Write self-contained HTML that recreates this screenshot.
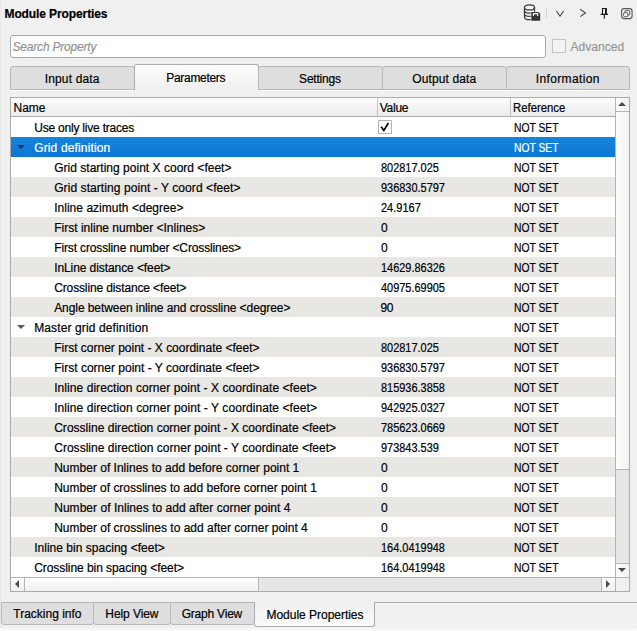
<!DOCTYPE html>
<html lang="en"><head><meta charset="utf-8"><title>Module Properties</title>
<style>
html,body{margin:0;padding:0}
body{width:637px;height:631px;background:#f0f0f0;overflow:hidden;position:relative;font:12px "Liberation Sans",sans-serif;color:#000}
.a{position:absolute}
.t{position:absolute;white-space:pre;line-height:20px;height:20px;font-size:12px;margin-top:1px;-webkit-text-stroke:0.2px}
.row{position:absolute;left:11px;width:604px;height:20px}
.alt{background:#e9e7e3}
.sel{background:linear-gradient(#1683dd,#0c78d5)}
.tab{position:absolute;box-sizing:border-box;border:1px solid #b9b9b9;background:#dedede}
.hdr{position:absolute;top:98px;height:18px;background:linear-gradient(#fcfcfc,#ececec)}
</style></head><body>

<div class="a" style="left:0;top:0;width:1px;height:628px;background:#e6e6e6"></div>
<div class="a" style="left:0;top:628px;width:637px;height:3px;background:linear-gradient(#f4f4f4,#fbfbfb)"></div>
<div class="t" style="left:4.50px;letter-spacing:-0.105px;top:3px;font-weight:bold;">Module Properties</div>
<svg class="a" style="left:520px;top:0" width="117" height="26" viewBox="520 0 117 26" fill="none">
<g stroke="#3a3a3a" stroke-width="1.25">
<ellipse cx="529.5" cy="7.4" rx="5" ry="2.5" fill="#f6f6f6"/>
<path d="M524.5 7.4v9.8c0 1.4 2.2 2.5 5 2.5h1.2M534.5 7.4v4M524.5 10.7c0 1.4 2.2 2.4 5 2.4h1.2M524.5 14c0 1.4 2.2 2.4 5 2.4h1.2"/>
</g>
<path d="M531.3 11.9h7l1.9 1.9v7h-8.9z" fill="#333"/>
<path d="M533.5 15.9v-2.3h4.1v2.3" stroke="#f4f4f4" stroke-width="1.2"/>
<rect x="546" y="8" width="1" height="10" fill="#d2d2d2"/>
<path d="M556.3 11l3.7 5 3.7-5" stroke="#444" stroke-width="1.1"/>
<path d="M580.2 9.2l5.2 3.7-5.2 3.7" stroke="#444" stroke-width="1.1"/>
<path d="M602.5 14.2v-5.7h3.6M600.6 14.4h7.4M604.3 14.4v4.4" stroke="#1c1c1c" stroke-width="1.1"/>
<rect x="605" y="8" width="1.9" height="6.4" fill="#1c1c1c"/>
<rect x="621.6" y="8.6" width="10.5" height="10" rx="2.6" stroke="#5a5552" stroke-width="1.1"/>
<rect x="625" y="10.6" width="4.8" height="4.4" rx="1" stroke="#5a5552" stroke-width="1"/>
<rect x="623.6" y="12.7" width="4.2" height="4" rx="1" stroke="#5a5552" stroke-width="1" fill="#f8f8f8"/>
</svg>
<div class="a" style="left:10px;top:35px;width:536px;height:23px;box-sizing:border-box;border:1px solid #aaa;border-radius:3px;background:#fff"></div>
<div class="t" style="left:12.50px;letter-spacing:-0.194px;top:36px;font-style:italic;color:#939393;">Search Property</div>
<div class="a" style="left:552px;top:39px;width:14px;height:14px;box-sizing:border-box;border:1px solid #c4c4c4;background:#f3f3f3"></div>
<div class="t" style="left:570.50px;letter-spacing:0.032px;top:36px;color:#979797;">Advanced</div>
<div class="a" style="left:10px;top:90px;width:620px;height:1px;background:#fff"></div>
<div class="tab" style="left:10px;top:66px;width:125px;height:24px;border-radius:3px 3px 0 0"></div>
<div class="tab" style="left:134px;top:64px;width:125px;height:26px;border-color:#ababab;border-bottom:none;border-radius:3px 3px 0 0;background:linear-gradient(#fdfdfd,#f0f0f0)"></div>
<div class="a" style="left:134px;top:90px;width:125px;height:1px;background:#f0f0f0"></div>
<div class="tab" style="left:258px;top:66px;width:125px;height:24px;border-radius:3px 3px 0 0"></div>
<div class="tab" style="left:382px;top:66px;width:125px;height:24px;border-radius:3px 3px 0 0"></div>
<div class="tab" style="left:506px;top:66px;width:124px;height:24px;border-radius:3px 3px 0 0"></div>
<div class="t" style="left:44.70px;letter-spacing:0.157px;top:68px;">Input data</div>
<div class="t" style="left:166.30px;letter-spacing:-0.315px;top:67px;">Parameters</div>
<div class="t" style="left:299.10px;letter-spacing:-0.208px;top:68px;">Settings</div>
<div class="t" style="left:412.30px;letter-spacing:0.108px;top:68px;">Output data</div>
<div class="t" style="left:535.70px;letter-spacing:0.377px;top:68px;">Information</div>
<div class="a" style="left:10px;top:97px;width:620px;height:495px;box-sizing:border-box;border:1px solid #ababab;background:#fff"></div>
<div class="hdr" style="left:11px;width:604px"></div>
<div class="a" style="left:11px;top:116px;width:604px;height:1px;background:#ababab"></div>
<div class="a" style="left:377px;top:98px;width:1px;height:18px;background:#c4c4c4"></div>
<div class="a" style="left:510px;top:98px;width:1px;height:18px;background:#c4c4c4"></div>
<div class="t" style="left:13.50px;letter-spacing:-0.005px;top:97px;">Name</div>
<div class="t" style="left:379.70px;letter-spacing:-0.253px;top:97px;">Value</div>
<div class="t" style="left:513.20px;transform:scaleX(0.9445);transform-origin:0 0;top:97px;">Reference</div>
<div class="t" style="left:34.20px;letter-spacing:-0.208px;top:117px;">Use only live traces</div>
<div class="a" style="left:378px;top:120px;width:14px;height:14px;box-sizing:border-box;border:1px solid #b4b4b4;background:#fff"></div>
<svg class="a" style="left:378px;top:120px" width="14" height="14" viewBox="0 0 14 14"><path d="M3.2 6.8l2.6 3.6 4.6-7.4" fill="none" stroke="#000" stroke-width="1.7"/></svg>
<div class="t" style="left:514.00px;transform:scaleX(0.8591);transform-origin:0 0;top:117px;">NOT SET</div>
<div class="row sel" style="top:137px"></div>
<div class="t" style="left:34.20px;letter-spacing:0.147px;top:137px;color:#fff;">Grid definition</div>
<div class="t" style="left:514.00px;transform:scaleX(0.8591);transform-origin:0 0;top:137px;color:#fff;">NOT SET</div>
<div class="t" style="left:54.20px;letter-spacing:0.016px;top:157px;">Grid starting point X coord &lt;feet&gt;</div>
<div class="t" style="left:380.50px;transform:scaleX(0.9116);transform-origin:0 0;top:157px">802817.025</div>
<div class="t" style="left:514.00px;transform:scaleX(0.8591);transform-origin:0 0;top:157px;">NOT SET</div>
<div class="row alt" style="top:177px"></div>
<div class="t" style="left:54.20px;letter-spacing:0.075px;top:177px;">Grid starting point - Y coord &lt;feet&gt;</div>
<div class="t" style="left:380.50px;transform:scaleX(0.9118);transform-origin:0 0;top:177px">936830.5797</div>
<div class="t" style="left:514.00px;transform:scaleX(0.8591);transform-origin:0 0;top:177px;">NOT SET</div>
<div class="t" style="left:54.20px;letter-spacing:0.024px;top:197px;">Inline azimuth &lt;degree&gt;</div>
<div class="t" style="left:380.50px;transform:scaleX(0.9172);transform-origin:0 0;top:197px">24.9167</div>
<div class="t" style="left:514.00px;transform:scaleX(0.8591);transform-origin:0 0;top:197px;">NOT SET</div>
<div class="row alt" style="top:217px"></div>
<div class="t" style="left:54.20px;letter-spacing:0.013px;top:217px;">First inline number &lt;Inlines&gt;</div>
<div class="t" style="left:381.10px;top:217px">0</div>
<div class="t" style="left:514.00px;transform:scaleX(0.8591);transform-origin:0 0;top:217px;">NOT SET</div>
<div class="t" style="left:54.20px;letter-spacing:-0.133px;top:237px;">First crossline number &lt;Crosslines&gt;</div>
<div class="t" style="left:381.10px;top:237px">0</div>
<div class="t" style="left:514.00px;transform:scaleX(0.8591);transform-origin:0 0;top:237px;">NOT SET</div>
<div class="row alt" style="top:257px"></div>
<div class="t" style="left:54.20px;letter-spacing:-0.085px;top:257px;">InLine distance &lt;feet&gt;</div>
<div class="t" style="left:380.50px;transform:scaleX(0.9118);transform-origin:0 0;top:257px">14629.86326</div>
<div class="t" style="left:514.00px;transform:scaleX(0.8591);transform-origin:0 0;top:257px;">NOT SET</div>
<div class="t" style="left:54.20px;letter-spacing:-0.130px;top:277px;">Crossline distance &lt;feet&gt;</div>
<div class="t" style="left:380.50px;transform:scaleX(0.9118);transform-origin:0 0;top:277px">40975.69905</div>
<div class="t" style="left:514.00px;transform:scaleX(0.8591);transform-origin:0 0;top:277px;">NOT SET</div>
<div class="row alt" style="top:297px"></div>
<div class="t" style="left:54.20px;letter-spacing:-0.077px;top:297px;">Angle between inline and crossline &lt;degree&gt;</div>
<div class="t" style="left:380.50px;letter-spacing:-0.459px;top:297px">90</div>
<div class="t" style="left:514.00px;transform:scaleX(0.8591);transform-origin:0 0;top:297px;">NOT SET</div>
<div class="t" style="left:34.20px;letter-spacing:0.124px;top:317px;">Master grid definition</div>
<div class="t" style="left:514.00px;transform:scaleX(0.8591);transform-origin:0 0;top:317px;">NOT SET</div>
<div class="row alt" style="top:337px"></div>
<div class="t" style="left:54.20px;letter-spacing:-0.004px;top:337px;">First corner point - X coordinate &lt;feet&gt;</div>
<div class="t" style="left:380.50px;transform:scaleX(0.9116);transform-origin:0 0;top:337px">802817.025</div>
<div class="t" style="left:514.00px;transform:scaleX(0.8591);transform-origin:0 0;top:337px;">NOT SET</div>
<div class="t" style="left:54.20px;letter-spacing:0.007px;top:357px;">First corner point - Y coordinate &lt;feet&gt;</div>
<div class="t" style="left:380.50px;transform:scaleX(0.9118);transform-origin:0 0;top:357px">936830.5797</div>
<div class="t" style="left:514.00px;transform:scaleX(0.8591);transform-origin:0 0;top:357px;">NOT SET</div>
<div class="row alt" style="top:377px"></div>
<div class="t" style="left:54.20px;letter-spacing:0.064px;top:377px;">Inline direction corner point - X coordinate &lt;feet&gt;</div>
<div class="t" style="left:380.50px;transform:scaleX(0.9118);transform-origin:0 0;top:377px">815936.3858</div>
<div class="t" style="left:514.00px;transform:scaleX(0.8591);transform-origin:0 0;top:377px;">NOT SET</div>
<div class="t" style="left:54.20px;letter-spacing:0.073px;top:397px;">Inline direction corner point - Y coordinate &lt;feet&gt;</div>
<div class="t" style="left:380.50px;transform:scaleX(0.9118);transform-origin:0 0;top:397px">942925.0327</div>
<div class="t" style="left:514.00px;transform:scaleX(0.8591);transform-origin:0 0;top:397px;">NOT SET</div>
<div class="row alt" style="top:417px"></div>
<div class="t" style="left:54.20px;letter-spacing:0.020px;top:417px;">Crossline direction corner point - X coordinate &lt;feet&gt;</div>
<div class="t" style="left:380.50px;transform:scaleX(0.9118);transform-origin:0 0;top:417px">785623.0669</div>
<div class="t" style="left:514.00px;transform:scaleX(0.8591);transform-origin:0 0;top:417px;">NOT SET</div>
<div class="t" style="left:54.20px;letter-spacing:0.028px;top:437px;">Crossline direction corner point - Y coordinate &lt;feet&gt;</div>
<div class="t" style="left:380.50px;transform:scaleX(0.9116);transform-origin:0 0;top:437px">973843.539</div>
<div class="t" style="left:514.00px;transform:scaleX(0.8591);transform-origin:0 0;top:437px;">NOT SET</div>
<div class="row alt" style="top:457px"></div>
<div class="t" style="left:54.20px;letter-spacing:0.006px;top:457px;">Number of Inlines to add before corner point 1</div>
<div class="t" style="left:381.10px;top:457px">0</div>
<div class="t" style="left:514.00px;transform:scaleX(0.8591);transform-origin:0 0;top:457px;">NOT SET</div>
<div class="t" style="left:54.20px;letter-spacing:-0.016px;top:477px;">Number of crosslines to add before corner point 1</div>
<div class="t" style="left:381.10px;top:477px">0</div>
<div class="t" style="left:514.00px;transform:scaleX(0.8591);transform-origin:0 0;top:477px;">NOT SET</div>
<div class="row alt" style="top:497px"></div>
<div class="t" style="left:54.20px;letter-spacing:0.034px;top:497px;">Number of Inlines to add after corner point 4</div>
<div class="t" style="left:381.10px;top:497px">0</div>
<div class="t" style="left:514.00px;transform:scaleX(0.8591);transform-origin:0 0;top:497px;">NOT SET</div>
<div class="t" style="left:54.20px;letter-spacing:0.003px;top:517px;">Number of crosslines to add after corner point 4</div>
<div class="t" style="left:381.10px;top:517px">0</div>
<div class="t" style="left:514.00px;transform:scaleX(0.8591);transform-origin:0 0;top:517px;">NOT SET</div>
<div class="row alt" style="top:537px"></div>
<div class="t" style="left:34.20px;letter-spacing:0.020px;top:537px;">Inline bin spacing &lt;feet&gt;</div>
<div class="t" style="left:380.50px;transform:scaleX(0.9118);transform-origin:0 0;top:537px">164.0419948</div>
<div class="t" style="left:514.00px;transform:scaleX(0.8591);transform-origin:0 0;top:537px;">NOT SET</div>
<div class="t" style="left:34.20px;letter-spacing:-0.061px;top:557px;">Crossline bin spacing &lt;feet&gt;</div>
<div class="t" style="left:380.50px;transform:scaleX(0.9118);transform-origin:0 0;top:557px">164.0419948</div>
<div class="t" style="left:514.00px;transform:scaleX(0.8591);transform-origin:0 0;top:557px;">NOT SET</div>
<svg class="a" style="left:17px;top:145px" width="8" height="4" viewBox="0 0 8 4"><path d="M0 0h8L4 4z" fill="#143a60"/></svg>
<svg class="a" style="left:17px;top:325px" width="8" height="4" viewBox="0 0 8 4"><path d="M0 0h8L4 4z" fill="#5a5a5a"/></svg>
<div class="a" style="left:615px;top:98px;width:1px;height:493px;background:#b4b4b4"></div>
<div class="a" style="left:616px;top:98px;width:13px;height:13px;background:linear-gradient(90deg,#fdfdfd,#f1f1f1)"></div>
<div class="a" style="left:616px;top:111px;width:13px;height:1px;background:#b4b4b4"></div>
<div class="a" style="left:616px;top:112px;width:13px;height:357px;background:linear-gradient(90deg,#fdfdfd,#f1f1f1)"></div>
<div class="a" style="left:616px;top:469px;width:13px;height:1px;background:#b4b4b4"></div>
<div class="a" style="left:616px;top:470px;width:13px;height:93px;background:#e6e6e6"></div>
<div class="a" style="left:616px;top:563px;width:13px;height:1px;background:#b4b4b4"></div>
<div class="a" style="left:616px;top:564px;width:13px;height:13px;background:linear-gradient(90deg,#fdfdfd,#f1f1f1)"></div>
<svg class="a" style="left:618px;top:102px" width="8" height="4" viewBox="0 0 8 4"><path d="M0 4h8L4 0z" fill="#4a4a4a"/></svg>
<svg class="a" style="left:618px;top:568px" width="8" height="4" viewBox="0 0 8 4"><path d="M0 0h8L4 4z" fill="#4a4a4a"/></svg>
<div class="a" style="left:11px;top:577px;width:618px;height:1px;background:#b4b4b4"></div>
<div class="a" style="left:11px;top:578px;width:13px;height:13px;background:linear-gradient(#fdfdfd,#f1f1f1)"></div>
<div class="a" style="left:24px;top:578px;width:1px;height:13px;background:#b4b4b4"></div>
<div class="a" style="left:25px;top:578px;width:233px;height:13px;background:linear-gradient(#fdfdfd,#f1f1f1)"></div>
<div class="a" style="left:258px;top:578px;width:1px;height:13px;background:#b4b4b4"></div>
<div class="a" style="left:259px;top:578px;width:342px;height:13px;background:#e6e6e6"></div>
<div class="a" style="left:601px;top:578px;width:1px;height:13px;background:#b4b4b4"></div>
<div class="a" style="left:602px;top:578px;width:13px;height:13px;background:linear-gradient(#fdfdfd,#f1f1f1)"></div>
<div class="a" style="left:616px;top:578px;width:13px;height:13px;background:#f0f0f0"></div>
<svg class="a" style="left:15px;top:580px" width="4" height="8" viewBox="0 0 4 8"><path d="M4 0v8L0 4z" fill="#4a4a4a"/></svg>
<svg class="a" style="left:606px;top:580px" width="4" height="8" viewBox="0 0 4 8"><path d="M0 0v8L4 4z" fill="#4a4a4a"/></svg>
<div class="a" style="left:1px;top:602px;width:636px;height:1px;background:#ababab"></div>
<div class="tab" style="left:1px;top:602px;width:93px;height:23px;border-radius:0 0 3px 3px;background:#dedede"></div>
<div class="tab" style="left:93px;top:602px;width:78px;height:23px;border-radius:0 0 3px 3px;background:#dedede"></div>
<div class="tab" style="left:170px;top:602px;width:85px;height:23px;border-radius:0 0 3px 3px;background:#dedede"></div>
<div class="tab" style="left:254px;top:602px;width:121px;height:25px;border-color:#ababab;border-top:none;border-radius:0 0 3px 3px;background:linear-gradient(#f0f0f0,#fafafa)"></div>
<div class="t" style="left:13.30px;letter-spacing:-0.004px;top:603px;">Tracking info</div>
<div class="t" style="left:105.30px;letter-spacing:-0.077px;top:603px;">Help View</div>
<div class="t" style="left:181.70px;letter-spacing:-0.209px;top:603px;">Graph View</div>
<div class="t" style="left:266.50px;letter-spacing:-0.024px;top:604px;">Module Properties</div>
</body></html>
